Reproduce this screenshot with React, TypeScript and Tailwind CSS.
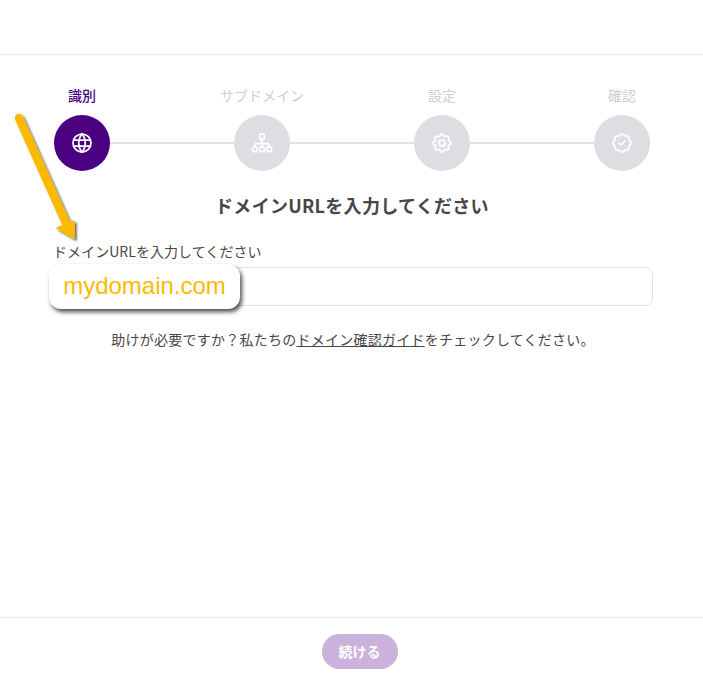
import { Fragment } from 'react';
import { TbRosetteDiscountCheck, TbSettings, TbWorld } from 'react-icons/tb';

const SitemapIcon = ({ size, strokeWidth }: { size: number; strokeWidth: number }) => (
  <svg width={size} height={size} viewBox="0 0 24 24" fill="none" stroke="currentColor" strokeWidth={strokeWidth} strokeLinejoin="round">
    <rect x="9.750" y="3" width="4.500" height="5" rx="1" />
    <rect x="2.500" y="16" width="4.500" height="4.500" rx="1" />
    <rect x="9.750" y="16" width="4.500" height="4.500" rx="1" />
    <rect x="17" y="16" width="4.500" height="4.500" rx="1" />
    <path d="M12 8v8M4.750 16v-2a1.500 1.500 0 0 1 1.500-1.500h11.500a1.500 1.500 0 0 1 1.500 1.500v2" />
  </svg>
);

const steps = [
  { label: '識別', icon: TbWorld, active: true },
  { label: 'サブドメイン', icon: SitemapIcon, active: false },
  { label: '設定', icon: TbSettings, active: false },
  { label: '確認', icon: TbRosetteDiscountCheck, active: false },
];

const App = () => {
  return (
    <div className="relative flex h-[688px] w-[703px] flex-col overflow-hidden bg-white font-['Noto_Sans_CJK_JP',sans-serif] text-[#4a4549]">
      <div className="h-[55px] shrink-0 border-b border-[#e8e8e8]" />

      <div className="flex-1 pl-[54px] pr-[50px]">
        <div className="mt-[30px] flex justify-between pr-[3px]">
          {steps.map((step) => (
            <div key={step.label} className="flex w-14 justify-center">
              <span
                className={`whitespace-nowrap text-[14px] leading-5 ${
                  step.active ? 'font-medium text-[#4b0082]' : 'text-[#cfcdd1]'
                }`}
              >
                {step.label}
              </span>
            </div>
          ))}
        </div>

        <div className="mt-2.5 flex items-center pr-[3px]">
          {steps.map((step, i) => (
            <Fragment key={step.label}>
              {i > 0 && <div className="h-0.5 flex-1 bg-[#e2e0e5]" />}
              <div
                className={`flex h-14 w-14 shrink-0 items-center justify-center rounded-full text-white ${
                  step.active ? 'bg-[#4b0082]' : 'bg-[#dfdde2]'
                }`}
              >
                <step.icon size={24} strokeWidth={step.active ? 1.75 : 1.75} />
              </div>
            </Fragment>
          ))}
        </div>

        <h1 className="mt-5 pr-[3px] text-center text-[18px] font-bold leading-7 tracking-[0.3px] text-[#4a4549]">
          ドメインURLを入力してください
        </h1>

        <label className="-ml-px mt-[22px] block text-[14px] leading-5 tracking-[0.05px]">
          ドメインURLを入力してください
        </label>
        <input
          className="mt-1.5 block h-[39px] w-full rounded-lg border border-[#e2e0e5] bg-white"
          type="text"
        />

        <p className="mt-[23px] pr-px text-center text-[14px] leading-5 tracking-[0.25px]">
          助けが必要ですか？私たちの<a className="underline">ドメイン確認ガイド</a>をチェックしてください。
        </p>
      </div>

      <div className="flex h-[71px] shrink-0 items-start justify-center border-t border-[#e8e8e8] pl-4 pt-4">
        <button className="h-[35px] w-[76px] rounded-full bg-[#cbb2dc] text-[14px] font-bold text-white">
          続ける
        </button>
      </div>

      {/* annotation over the form */}
      <svg className="absolute left-0 top-[105px]" width="90" height="140" viewBox="0 0 90 140">
        <defs>
          <filter id="arrowShadow" x="-30%" y="-30%" width="160%" height="160%">
            <feDropShadow dx="2" dy="2" stdDeviation="1.2" floodColor="#000" floodOpacity="0.6" />
          </filter>
        </defs>
        <g filter="url(#arrowShadow)" fill="#fdb900" stroke="#fdb900" strokeLinejoin="round">
          <path d="M19 13 L66 118" fill="none" strokeWidth="8.500" strokeLinecap="round" />
          <path d="M57 123 L74 116 L74 133 Z" strokeWidth="1.500" />
        </g>
      </svg>

      <div className="absolute left-[49px] top-[264px] flex h-[45px] w-[191px] items-center justify-center rounded-xl bg-white pb-0.5 font-['Liberation_Sans',sans-serif] text-[24px] text-[#fdb900] shadow-[2px_3px_4px_rgba(0,0,0,0.7)]">
        mydomain.com
      </div>
    </div>
  );
};

export default App;
